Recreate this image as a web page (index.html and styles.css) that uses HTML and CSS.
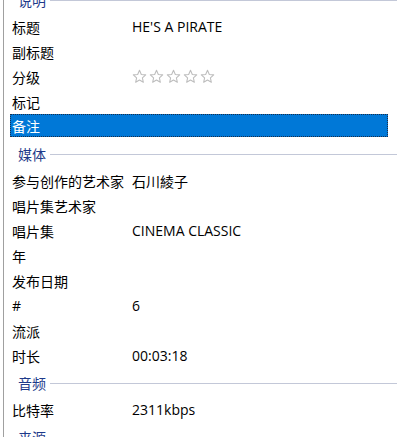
FILE: index.html
```html
<!DOCTYPE html>
<html lang="zh-CN">
<head>
    <meta charset="UTF-8">
    <title>属性 - 详细信息</title>
    <link rel="stylesheet" href="styles.css">
</head>
<body>
    <div class="panel">
        <div class="list">
            <div class="group">
                <div class="group-head"><span>说明</span></div>
                <div class="row"><span class="label">标题</span><span class="value">HE'S A PIRATE</span></div>
                <div class="row"><span class="label">副标题</span><span class="value"></span></div>
                <div class="row">
                    <span class="label">分级</span>
                    <span class="value stars">
                        <svg viewBox="0 0 14 14"><path d="M7 1.2l1.7 3.9 4.1.4-3.1 2.8.9 4.1L7 10.3l-3.6 2.1.9-4.1L1.2 5.5l4.1-.4z"/></svg>
                        <svg viewBox="0 0 14 14"><path d="M7 1.2l1.7 3.9 4.1.4-3.1 2.8.9 4.1L7 10.3l-3.6 2.1.9-4.1L1.2 5.5l4.1-.4z"/></svg>
                        <svg viewBox="0 0 14 14"><path d="M7 1.2l1.7 3.9 4.1.4-3.1 2.8.9 4.1L7 10.3l-3.6 2.1.9-4.1L1.2 5.5l4.1-.4z"/></svg>
                        <svg viewBox="0 0 14 14"><path d="M7 1.2l1.7 3.9 4.1.4-3.1 2.8.9 4.1L7 10.3l-3.6 2.1.9-4.1L1.2 5.5l4.1-.4z"/></svg>
                        <svg viewBox="0 0 14 14"><path d="M7 1.2l1.7 3.9 4.1.4-3.1 2.8.9 4.1L7 10.3l-3.6 2.1.9-4.1L1.2 5.5l4.1-.4z"/></svg>
                    </span>
                </div>
                <div class="row"><span class="label">标记</span><span class="value"></span></div>
                <div class="row selected"><span class="label">备注</span><span class="value"></span></div>
            </div>

            <div class="group">
                <div class="group-head"><span>媒体</span></div>
                <div class="row"><span class="label">参与创作的艺术家</span><span class="value">石川綾子</span></div>
                <div class="row"><span class="label">唱片集艺术家</span><span class="value"></span></div>
                <div class="row"><span class="label">唱片集</span><span class="value">CINEMA CLASSIC</span></div>
                <div class="row"><span class="label">年</span><span class="value"></span></div>
                <div class="row"><span class="label">发布日期</span><span class="value"></span></div>
                <div class="row"><span class="label">#</span><span class="value">6</span></div>
                <div class="row"><span class="label">流派</span><span class="value"></span></div>
                <div class="row"><span class="label">时长</span><span class="value">00:03:18</span></div>
            </div>

            <div class="group">
                <div class="group-head"><span>音频</span></div>
                <div class="row"><span class="label">比特率</span><span class="value">2311kbps</span></div>
            </div>

            <div class="group">
                <div class="group-head"><span>来源</span></div>
                <div class="row"><span class="label">发布者</span><span class="value"></span></div>
            </div>
        </div>
    </div>
</body>
</html>
```

FILE: styles.css
```css
html, body {
    margin: 0;
    height: 100%;
    overflow: hidden;
    background: #ffffff;
}
body {
    font-family: "Open Sans", "Noto Sans CJK SC", sans-serif;
    font-size: 14px;
    color: #000000;
}
.panel {
    margin-left: 3px;
    height: 100%;
    border-left: 1px solid #a0a0a0;
    overflow: hidden;
}
/* list is scrolled down a little, so the first heading is cut */
.list {
    margin-top: -15px;
    padding: 0 6px;
}
.group-head {
    display: flex;
    align-items: center;
    gap: 4px;
    height: 29px;
    padding-left: 8px;
    color: #1e3a8a;
}
.group-head::after {
    content: "";
    flex: 1;
    height: 1px;
    margin-top: 2px;
    background: #c3c8d8;
}
.row {
    display: grid;
    grid-template-columns: 120px 1fr;
    align-items: center;
    height: 25px;
    padding-left: 2px;
    margin-right: 9px;
    white-space: nowrap;
}
.row.selected {
    background: #0078d7;
    color: #ffffff;
    height: 23px;
    margin-bottom: 2px;
    outline: 1px dotted #1b2f4a;
    outline-offset: -1px;
}
.stars {
    display: flex;
    gap: 2px;
}
.stars svg {
    width: 15px;
    height: 15px;
    fill: none;
    stroke: #bdbdbd;
    stroke-width: 1;
    stroke-linejoin: round;
}
```
